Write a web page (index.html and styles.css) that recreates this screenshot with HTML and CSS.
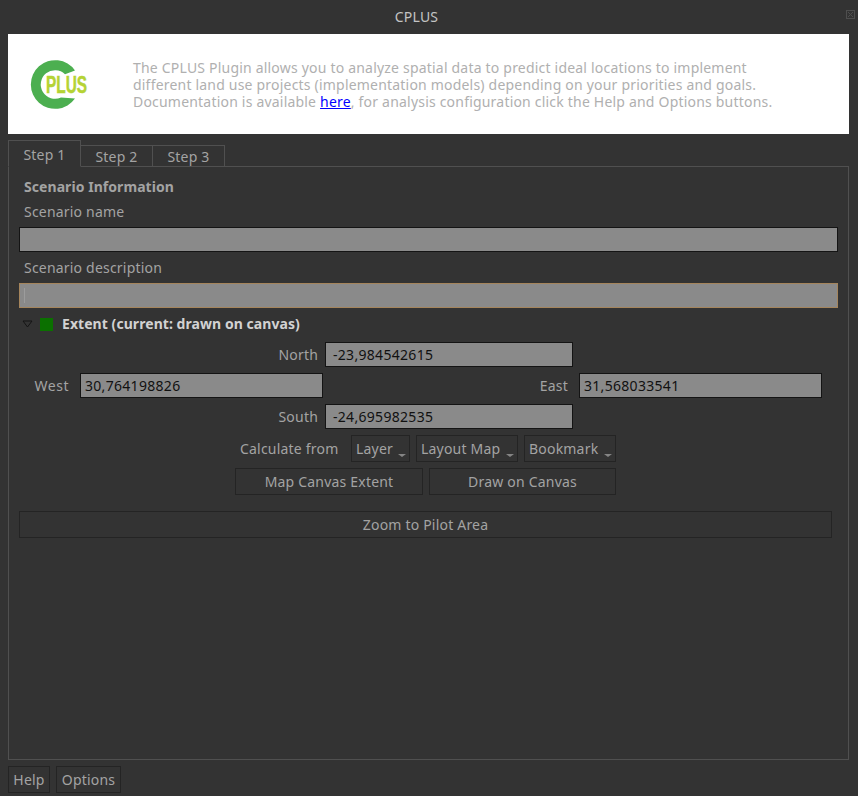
FILE: index.html
```html
<!DOCTYPE html>
<html lang="en">
<head>
<meta charset="utf-8">
<title>CPLUS</title>
<link rel="stylesheet" href="styles.css">
</head>
<body>
<div class="window">
  <header class="titlebar">
    <span class="title">CPLUS</span>
    <svg class="float-icon" width="9" height="9" viewBox="0 0 9 9"><rect x=".5" y=".5" width="8" height="8" fill="none" stroke="#4e4e4e"/><path d="M2 2l5 5M7 2L2 7" stroke="#4e4e4e"/></svg>
  </header>
  <section class="banner">
    <svg class="logo" width="66" height="52" viewBox="0 0 66 52">
      <path d="M52 12.500A24.300 24.300 0 1 0 52 40.500L38 39.500A14.300 14.300 0 1 1 42 16.200Z" fill="#4caf50"/>
      <text class="logo-text" x="23" y="35" textLength="41" lengthAdjust="spacingAndGlyphs">PLUS</text>
    </svg>
    <p class="intro">The CPLUS Plugin allows you to analyze spatial data to predict ideal locations to implement<br>different land use projects (implementation models) depending on your priorities and goals.<br>Documentation is available <a href="#" class="link">here</a>, for analysis configuration click the Help and Options buttons.</p>
  </section>
  <nav class="tabs">
    <span class="tab tab-active">Step 1</span>
    <span class="tab">Step 2</span>
    <span class="tab">Step 3</span>
  </nav>
  <main class="pane">
    <h2 class="heading">Scenario Information</h2>
    <label class="field-label">Scenario name</label>
    <div class="input input-wide"></div>
    <label class="field-label field-label-2">Scenario description</label>
    <div class="input input-wide input-focus"><span class="caret"></span></div>
    <div class="extent-head">
      <svg width="11" height="8" viewBox="0 0 11 8"><path d="M1 1h9L5.500 7Z" fill="none" stroke="#141414"/></svg>
      <span class="swatch"></span>
      <strong class="extent-title">Extent (current: drawn on canvas)</strong>
    </div>
    <div class="coord-row coord-north">
      <span class="coord-label">North</span>
      <div class="input coord-input">-23,984542615</div>
    </div>
    <div class="coord-row coord-middle">
      <span class="coord-label west-label">West</span>
      <div class="input coord-input west">30,764198826</div>
      <span class="coord-label east-label">East</span>
      <div class="input coord-input west">31,568033541</div>
    </div>
    <div class="coord-row coord-north">
      <span class="coord-label">South</span>
      <div class="input coord-input">-24,695982535</div>
    </div>
    <div class="calc-row">
      <span class="calc-label">Calculate from</span>
      <button class="btn menu-btn w-layer">Layer<i class="arrow"></i></button>
      <button class="btn menu-btn w-layout">Layout Map<i class="arrow"></i></button>
      <button class="btn menu-btn w-bookmark">Bookmark<i class="arrow"></i></button>
    </div>
    <div class="extent-btns">
      <button class="btn w-canvas">Map Canvas Extent</button>
      <button class="btn w-draw">Draw on Canvas</button>
    </div>
    <button class="btn zoom-btn">Zoom to Pilot Area</button>
  </main>
  <footer class="footer">
    <button class="btn w-help">Help</button>
    <button class="btn w-options">Options</button>
  </footer>
</div>
</body>
</html>
```
FILE: styles.css
```css
* { box-sizing: border-box; }
html, body { margin: 0; padding: 0; }
body {
  width: 858px;
  height: 796px;
  overflow: hidden;
  background: #333333;
  color: #a3a3a3;
  font-family: "Noto Sans", "DejaVu Sans", sans-serif;
  font-size: 14px;
  line-height: 18px;
  letter-spacing: 0.2px;
}
.window { display: flex; flex-direction: column; height: 796px; padding: 0 9px 3px 8px; }
.titlebar { position: relative; height: 34px; flex: none; display: flex; align-items: center; justify-content: center; padding-right: 24px; }
.title { font-size: 14px; color: #c4c4c4; }
.float-icon { position: absolute; right: -6px; top: 10px; }
.banner { flex: none; height: 100px; background: #ffffff; display: flex; align-items: center; }
.logo { flex: none; margin: 0 0 0 15px; overflow: visible; }
.logo-text { font-family: "Liberation Sans Narrow", "Liberation Sans", sans-serif; font-weight: 700; font-size: 24px; fill: #b5d334; stroke: #b5d334; stroke-width: 0.5px; letter-spacing: 0; }
.intro { margin: 0 0 0 44px; color: #b0b0b0; font-size: 14px; line-height: 17px; white-space: nowrap; letter-spacing: 0.2px; }
.link { color: #0000ff; text-decoration: underline; }
.tabs { flex: none; height: 33px; display: flex; align-items: flex-end; margin-bottom: -1px; position: relative; z-index: 1; }
.tab { width: 72px; height: 22px; padding-top: 2px; border: 1px solid #505050; border-left-width: 0; display: flex; align-items: center; justify-content: center; font-size: 14px; color: #a3a3a3; }
.tab-active { width: 73px; height: 27px; border-left-width: 1px; border-bottom-color: #333333; }
.pane { flex: 1; border: 1px solid #505050; padding: 10px 10px 0 10px; display: flex; flex-direction: column; align-items: flex-start; }
.heading { margin: 0 0 0 5px; font-size: 14px; font-weight: 700; line-height: 20px; color: #a3a3a3; letter-spacing: 0.06px; }
.field-label { margin: 5px 0 5px 5px; line-height: 20px; height: 20px; }
.field-label-2 { margin-top: 6px; }
.input { height: 25px; background: #8a8a8a; border: 1px solid #141414; color: #111111; padding: 0 4px; line-height: 23px; display: flex; align-items: center; letter-spacing: 0.3px; }
.input-wide { width: 819px; flex: none; }
.input-focus { border-color: #a5855c; }
.caret { display: block; width: 1px; height: 15px; background: #9c9c9c; }
.extent-head { display: flex; align-items: center; height: 20px; margin: 6px 0 8px 3px; }
.swatch { width: 13px; height: 13px; background: #0b7000; margin-left: 7px; }
.extent-title { margin-left: 9px; font-size: 14px; color: #d2d2d2; letter-spacing: 0.06px; }
.coord-row { display: flex; align-items: center; margin-bottom: 6px; }
.coord-north { margin-left: 259px; }
.coord-north .coord-input { padding-left: 7px; }
.coord-middle { margin-left: 15px; }
.coord-label { width: 40px; text-align: right; white-space: nowrap; }
.coord-north .coord-label { margin-right: 7px; }
.coord-middle .coord-label { width: 35px; margin-right: 11px; }
.coord-middle .west-label { letter-spacing: 0.5px; }
.coord-middle .east-label { margin-left: 216px; width: 29px; }
.coord-input { width: 248px; flex: none; }
.west { width: 243px; }
.calc-row { display: flex; align-items: center; gap: 6px; margin: 0 0 6px 221px; }
.calc-label { width: 105px; white-space: nowrap; }
.btn { height: 27px; background: #333333; border: 1px solid #242424; color: #a3a3a3; font: inherit; letter-spacing: inherit; padding: 0; white-space: nowrap; }
.menu-btn { position: relative; text-align: left; padding-left: 4px; }
.arrow { position: absolute; right: 3px; bottom: 4px; width: 0; height: 0; border: 4px solid transparent; border-top: 3px solid #858585; border-bottom: 0; }
.w-layer { width: 59px; }
.w-layout { width: 102px; }
.w-bookmark { width: 92px; }
.extent-btns { display: flex; gap: 6px; margin: 0 0 16px 216px; }
.w-canvas { width: 188px; }
.w-draw { width: 187px; }
.zoom-btn { width: 813px; }
.footer { flex: none; display: flex; gap: 6px; margin-top: 6px; height: 27px; }
.w-help { width: 42px; }
.w-options { width: 65px; }
```
